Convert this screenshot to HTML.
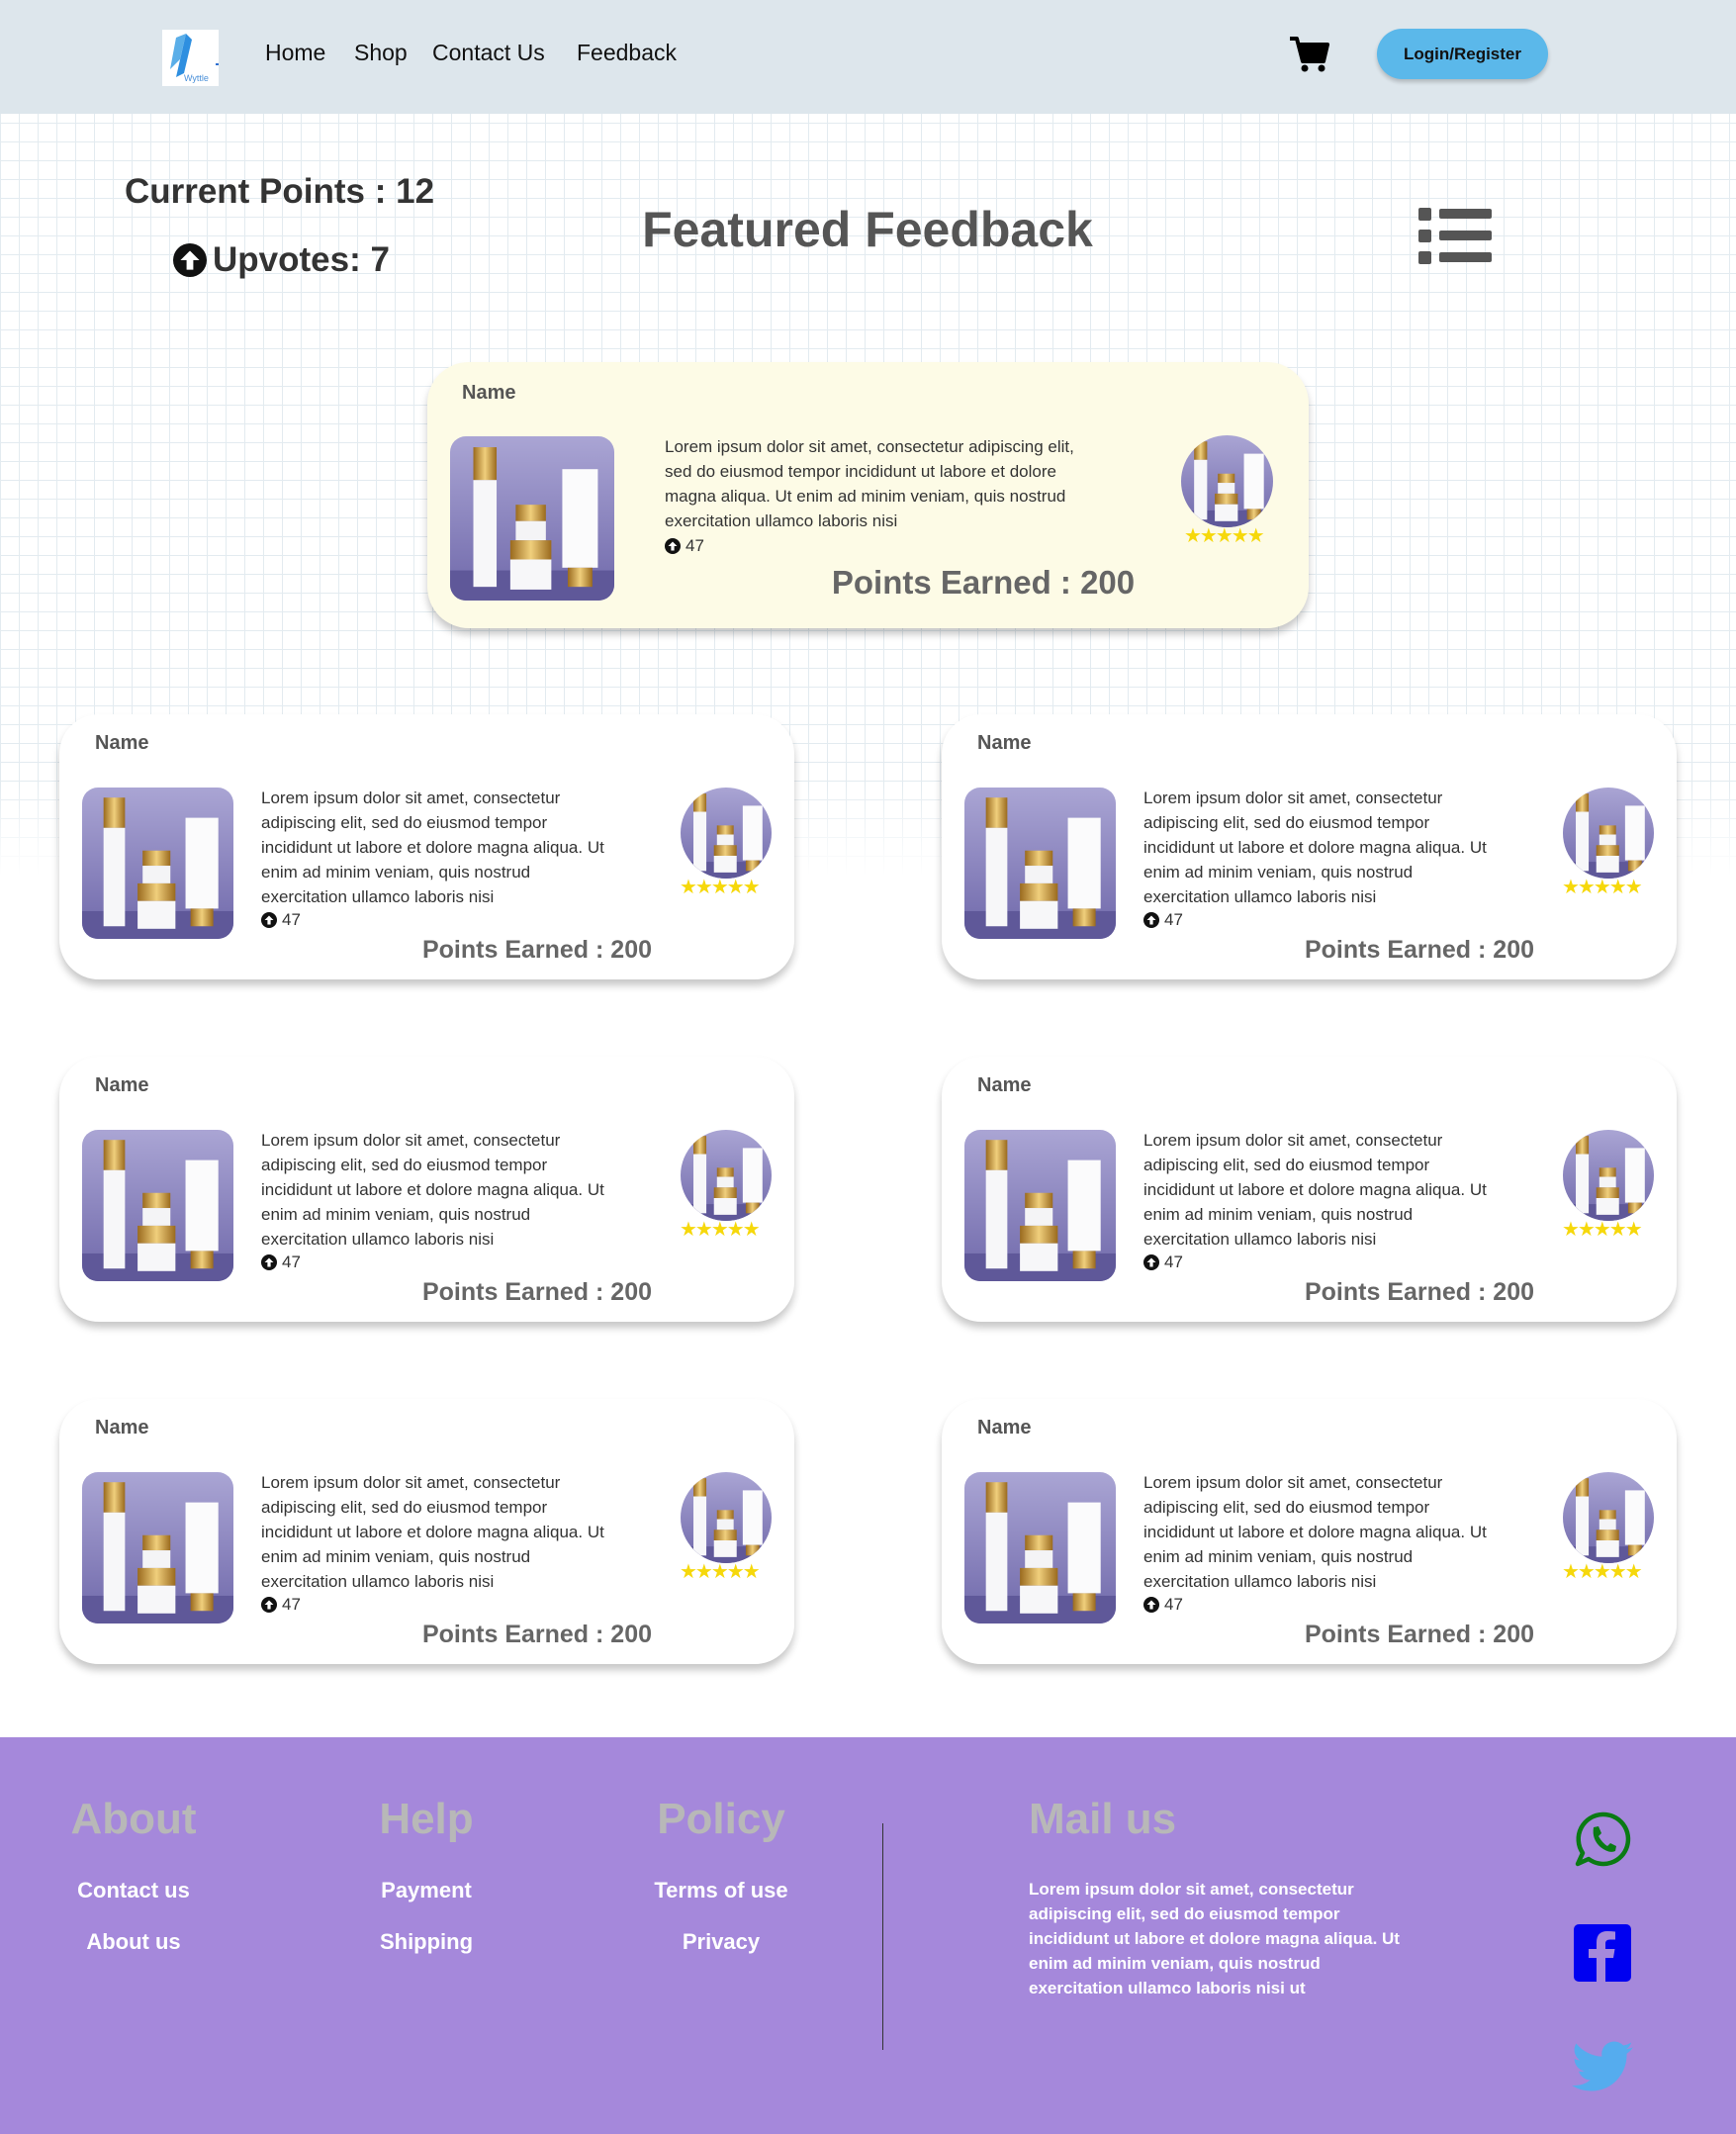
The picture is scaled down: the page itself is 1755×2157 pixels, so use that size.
<!DOCTYPE html>
<html><head><meta charset="utf-8">
<style>
*{margin:0;padding:0;box-sizing:border-box}
body{width:1755px;height:2157px;position:relative;overflow:hidden;background:#fff;font-family:"Liberation Sans",sans-serif;color:#333}
.abs{position:absolute}
#hdr{left:0;top:0;width:1755px;height:115px;background:#dde6ec}
.nav{top:40px;font-size:23px;color:#111}
#grid{left:0;top:115px;width:1755px;height:770px;
background-image:repeating-linear-gradient(90deg,#e3ebf0 0 1px,transparent 1px 19px),repeating-linear-gradient(0deg,#e3ebf0 0 1px,transparent 1px 19px);
-webkit-mask-image:linear-gradient(#000 88%,transparent);mask-image:linear-gradient(#000 88%,transparent)}
.card{position:absolute;width:743px;height:268px;background:#fff;border-radius:40px;box-shadow:0 6px 8px rgba(0,0,0,.22)}
.card .nm{position:absolute;left:36px;top:18px;font-size:20px;font-weight:bold;color:#555}
.card .pi{position:absolute;left:23px;top:74px;width:153px;height:153px;border-radius:16px;overflow:hidden}
.card .tx{position:absolute;left:204px;top:72px;font-size:17px;line-height:25px;color:#333;white-space:nowrap}
.card .up{position:absolute;left:204px;top:198px;font-size:17px;color:#333}
.card .ci{position:absolute;left:628px;top:74px;width:92px;height:92px;border-radius:50%;overflow:hidden}
.card .st{position:absolute;left:627px;top:162px;font-size:20px;color:#f6d80b;letter-spacing:-2px}
.card .pe{position:absolute;left:223px;width:520px;text-align:center;top:224px;font-size:25px;font-weight:bold;color:#666}
.fh{top:1814px;font-size:44px;font-weight:bold;color:#b8b8b8;width:240px;text-align:center}
.fl{font-size:22px;font-weight:bold;color:#fff;width:240px;text-align:center}
svg{display:block}
</style></head><body>
<svg width="0" height="0" style="position:absolute">
<defs>
<linearGradient id="bg" x1="0" y1="0" x2="0" y2="1"><stop offset="0" stop-color="#aaa5d4"/><stop offset="1" stop-color="#6f68aa"/></linearGradient>
<linearGradient id="gd" x1="0" y1="0" x2="1" y2="0"><stop offset="0" stop-color="#9a6a1e"/><stop offset=".5" stop-color="#f0cf7c"/><stop offset="1" stop-color="#9a6a1e"/></linearGradient>
<g id="prod">
<rect width="120" height="120" fill="url(#bg)"/>
<rect y="98" width="120" height="22" fill="#5f5899"/>
<rect x="17" y="8" width="17" height="24" fill="url(#gd)"/>
<rect x="17" y="32" width="17" height="78" fill="#f7f7f9"/>
<rect x="48" y="50" width="22" height="12" fill="url(#gd)"/>
<rect x="48" y="62" width="22" height="14" fill="#f4f4f6"/>
<rect x="44" y="76" width="30" height="14" fill="url(#gd)"/>
<rect x="44" y="90" width="30" height="22" fill="#f7f7f9"/>
<rect x="82" y="24" width="26" height="72" fill="#fbfbfc"/>
<rect x="86" y="96" width="18" height="14" fill="url(#gd)"/>
</g>
<g id="upi"><circle cx="8" cy="8" r="8" fill="#111"/><path d="M8 3.5 L12.5 8 H9.6 V12.5 H6.4 V8 H3.5 Z" fill="#fff"/></g>
</defs></svg>

<div id="hdr" class="abs"></div>
<div class="abs" style="left:164px;top:30px;width:57px;height:57px;background:#fff">
<svg width="57" height="57" viewBox="0 0 57 57"><path d="M14 8 L24 4 L18 30 L8 40 Z" fill="#5aaee8"/><path d="M24 4 L30 10 L22 44 L14 48 Z" fill="#2e8fe0"/><text x="22" y="52" font-size="9" fill="#4a90d9" font-family="Liberation Sans">Wyttle</text><rect x="54" y="34" width="3" height="2" fill="#2e6fd0"/></svg></div>
<div class="abs nav" style="left:268px">Home</div>
<div class="abs nav" style="left:358px">Shop</div>
<div class="abs nav" style="left:437px">Contact Us</div>
<div class="abs nav" style="left:583px">Feedback</div>
<svg class="abs" style="left:1302px;top:36px" width="42" height="38" viewBox="0 0 42 38"><path d="M2 3 H9 L15 26 H36 L40 9 H11" fill="none" stroke="#000" stroke-width="4" stroke-linejoin="round"/><path d="M12 9 H40 L36 24 H15 Z" fill="#000"/><circle cx="17" cy="33" r="3.5" fill="#000"/><circle cx="34" cy="33" r="3.5" fill="#000"/></svg>
<div class="abs" style="left:1392px;top:29px;width:173px;height:51px;border-radius:26px;background:#5bb8ea;box-shadow:0 3px 4px rgba(0,0,0,.2);font-size:17px;font-weight:bold;color:#111;text-align:center;line-height:51px">Login/Register</div>

<div id="grid" class="abs"></div>

<div class="abs" style="left:110px;top:174px;width:345px;text-align:center;font-size:35px;font-weight:bold;color:#333">Current Points : 12</div>
<div class="abs" style="left:175px;top:243px;font-size:35px;font-weight:bold;color:#333;display:flex;align-items:center"><svg width="34" height="34" viewBox="0 0 16 16" style="margin-right:6px"><use href="#upi"/></svg>Upvotes: 7</div>
<div class="abs" style="left:577px;top:203px;width:600px;text-align:center;font-size:50px;font-weight:bold;color:#555">Featured Feedback</div>
<svg class="abs" style="left:1434px;top:210px" width="74" height="58" viewBox="0 0 74 58"><rect x="0" y="0" width="13" height="13" rx="2" fill="#555"/><rect x="21" y="1" width="53" height="10" rx="2" fill="#555"/><rect x="0" y="22" width="13" height="13" rx="2" fill="#555"/><rect x="21" y="23" width="53" height="10" rx="2" fill="#555"/><rect x="0" y="44" width="13" height="13" rx="2" fill="#555"/><rect x="21" y="45" width="53" height="10" rx="2" fill="#555"/></svg>

<!-- featured -->
<div class="card" style="left:432px;top:366px;width:891px;height:269px;background:#fdfbe6;border-radius:42px">
<div class="nm" style="left:35px;top:20px">Name</div>
<div class="pi" style="left:23px;top:75px;width:166px;height:166px"><svg width="166" height="166" viewBox="0 0 120 120"><use href="#prod"/></svg></div>
<div class="tx" style="left:240px;top:73px;font-size:17px">Lorem ipsum dolor sit amet, consectetur adipiscing elit,<br>sed do eiusmod tempor incididunt ut labore et dolore<br>magna aliqua. Ut enim ad minim veniam, quis nostrud<br>exercitation ullamco laboris nisi</div>
<div class="up" style="left:240px;top:176px;display:flex;align-items:center"><svg width="16" height="16" viewBox="0 0 16 16" style="margin-right:5px"><use href="#upi"/></svg>47</div>
<div class="ci" style="left:762px;top:74px;width:93px;height:93px"><svg width="93" height="93" viewBox="0 0 120 120"><use href="#prod"/></svg></div>
<div class="st" style="left:765px;top:163px">★★★★★</div>
<div class="pe" style="left:312px;width:500px;top:204px;font-size:33px">Points Earned : 200</div>
</div>

<!-- grid cards -->
<div class="card" style="left:60px;top:722px"><div class="nm">Name</div><div class="pi"><svg width="153" height="153" viewBox="0 0 120 120"><use href="#prod"/></svg></div><div class="tx">Lorem ipsum dolor sit amet, consectetur<br>adipiscing elit, sed do eiusmod tempor<br>incididunt ut labore et dolore magna aliqua. Ut<br>enim ad minim veniam, quis nostrud<br>exercitation ullamco laboris nisi</div><div class="up" style="display:flex;align-items:center"><svg width="16" height="16" viewBox="0 0 16 16" style="margin-right:5px"><use href="#upi"/></svg>47</div><div class="ci"><svg width="92" height="92" viewBox="0 0 120 120"><use href="#prod"/></svg></div><div class="st">★★★★★</div><div class="pe">Points Earned : 200</div></div>
<div class="card" style="left:952px;top:722px"><div class="nm">Name</div><div class="pi"><svg width="153" height="153" viewBox="0 0 120 120"><use href="#prod"/></svg></div><div class="tx">Lorem ipsum dolor sit amet, consectetur<br>adipiscing elit, sed do eiusmod tempor<br>incididunt ut labore et dolore magna aliqua. Ut<br>enim ad minim veniam, quis nostrud<br>exercitation ullamco laboris nisi</div><div class="up" style="display:flex;align-items:center"><svg width="16" height="16" viewBox="0 0 16 16" style="margin-right:5px"><use href="#upi"/></svg>47</div><div class="ci"><svg width="92" height="92" viewBox="0 0 120 120"><use href="#prod"/></svg></div><div class="st">★★★★★</div><div class="pe">Points Earned : 200</div></div>
<div class="card" style="left:60px;top:1068px"><div class="nm">Name</div><div class="pi"><svg width="153" height="153" viewBox="0 0 120 120"><use href="#prod"/></svg></div><div class="tx">Lorem ipsum dolor sit amet, consectetur<br>adipiscing elit, sed do eiusmod tempor<br>incididunt ut labore et dolore magna aliqua. Ut<br>enim ad minim veniam, quis nostrud<br>exercitation ullamco laboris nisi</div><div class="up" style="display:flex;align-items:center"><svg width="16" height="16" viewBox="0 0 16 16" style="margin-right:5px"><use href="#upi"/></svg>47</div><div class="ci"><svg width="92" height="92" viewBox="0 0 120 120"><use href="#prod"/></svg></div><div class="st">★★★★★</div><div class="pe">Points Earned : 200</div></div>
<div class="card" style="left:952px;top:1068px"><div class="nm">Name</div><div class="pi"><svg width="153" height="153" viewBox="0 0 120 120"><use href="#prod"/></svg></div><div class="tx">Lorem ipsum dolor sit amet, consectetur<br>adipiscing elit, sed do eiusmod tempor<br>incididunt ut labore et dolore magna aliqua. Ut<br>enim ad minim veniam, quis nostrud<br>exercitation ullamco laboris nisi</div><div class="up" style="display:flex;align-items:center"><svg width="16" height="16" viewBox="0 0 16 16" style="margin-right:5px"><use href="#upi"/></svg>47</div><div class="ci"><svg width="92" height="92" viewBox="0 0 120 120"><use href="#prod"/></svg></div><div class="st">★★★★★</div><div class="pe">Points Earned : 200</div></div>
<div class="card" style="left:60px;top:1414px"><div class="nm">Name</div><div class="pi"><svg width="153" height="153" viewBox="0 0 120 120"><use href="#prod"/></svg></div><div class="tx">Lorem ipsum dolor sit amet, consectetur<br>adipiscing elit, sed do eiusmod tempor<br>incididunt ut labore et dolore magna aliqua. Ut<br>enim ad minim veniam, quis nostrud<br>exercitation ullamco laboris nisi</div><div class="up" style="display:flex;align-items:center"><svg width="16" height="16" viewBox="0 0 16 16" style="margin-right:5px"><use href="#upi"/></svg>47</div><div class="ci"><svg width="92" height="92" viewBox="0 0 120 120"><use href="#prod"/></svg></div><div class="st">★★★★★</div><div class="pe">Points Earned : 200</div></div>
<div class="card" style="left:952px;top:1414px"><div class="nm">Name</div><div class="pi"><svg width="153" height="153" viewBox="0 0 120 120"><use href="#prod"/></svg></div><div class="tx">Lorem ipsum dolor sit amet, consectetur<br>adipiscing elit, sed do eiusmod tempor<br>incididunt ut labore et dolore magna aliqua. Ut<br>enim ad minim veniam, quis nostrud<br>exercitation ullamco laboris nisi</div><div class="up" style="display:flex;align-items:center"><svg width="16" height="16" viewBox="0 0 16 16" style="margin-right:5px"><use href="#upi"/></svg>47</div><div class="ci"><svg width="92" height="92" viewBox="0 0 120 120"><use href="#prod"/></svg></div><div class="st">★★★★★</div><div class="pe">Points Earned : 200</div></div>

<!-- footer -->
<div class="abs" style="left:0;top:1756px;width:1755px;height:401px;background:#a588db"></div>
<div class="abs fh" style="left:15px">About</div>
<div class="abs fh" style="left:311px">Help</div>
<div class="abs fh" style="left:609px">Policy</div>
<div class="abs fl" style="left:15px;top:1898px">Contact us</div>
<div class="abs fl" style="left:15px;top:1950px">About us</div>
<div class="abs fl" style="left:311px;top:1898px">Payment</div>
<div class="abs fl" style="left:311px;top:1950px">Shipping</div>
<div class="abs fl" style="left:609px;top:1898px">Terms of use</div>
<div class="abs fl" style="left:609px;top:1950px">Privacy</div>
<div class="abs" style="left:892px;top:1843px;width:1px;height:229px;background:#333"></div>
<div class="abs" style="left:1040px;top:1814px;font-size:44px;font-weight:bold;color:#b8b8b8">Mail us</div>
<div class="abs" style="left:1040px;top:1897px;font-size:17px;line-height:25px;font-weight:bold;color:#fff;white-space:nowrap">Lorem ipsum dolor sit amet, consectetur<br>adipiscing elit, sed do eiusmod tempor<br>incididunt ut labore et dolore magna aliqua. Ut<br>enim ad minim veniam, quis nostrud<br>exercitation ullamco laboris nisi ut</div>
<svg class="abs" style="left:1591px;top:1830px" width="58" height="58" viewBox="0 0 58 58"><path d="M29 4 A25 25 0 1 1 15 49 L4 54 L9 43 A25 25 0 0 1 29 4 Z" fill="none" stroke="#0a7a14" stroke-width="4.5" stroke-linejoin="round"/><path d="M20 17 L25 16 L28 23 L25 26 Q29 33 34 36 L37 33 L43 36 L42 41 Q36 44 27 37 Q18 29 20 17 Z" fill="#0a7a14"/></svg>
<svg class="abs" style="left:1591px;top:1945px" width="58" height="58" viewBox="0 0 58 58"><rect width="58" height="58" rx="5" fill="#0000f0"/><path d="M32 58 V34 H40 L41.5 25 H32 V19.5 Q32 15.5 36.5 15.5 H42 V7.5 Q38 7 34 7 Q23 7 23 18.5 V25 H15 V34 H23 V58 Z" fill="#a588db"/></svg>
<svg class="abs" style="left:1589px;top:2063px" width="62" height="52" viewBox="0 0 24 20"><path d="M24 2.4a10 10 0 0 1-2.8.8 4.9 4.9 0 0 0 2.1-2.7 9.8 9.8 0 0 1-3.1 1.2A4.9 4.9 0 0 0 11.8 6 14 14 0 0 1 1.7.9a4.9 4.9 0 0 0 1.5 6.6A4.9 4.9 0 0 1 1 6.9a4.9 4.9 0 0 0 3.9 4.8 4.9 4.9 0 0 1-2.2.1 4.9 4.9 0 0 0 4.6 3.4A9.9 9.9 0 0 1 0 17.3 14 14 0 0 0 7.5 19.5c9.1 0 14-7.5 14-14v-.6A10 10 0 0 0 24 2.4z" fill="#55acee"/></svg>
</body></html>
